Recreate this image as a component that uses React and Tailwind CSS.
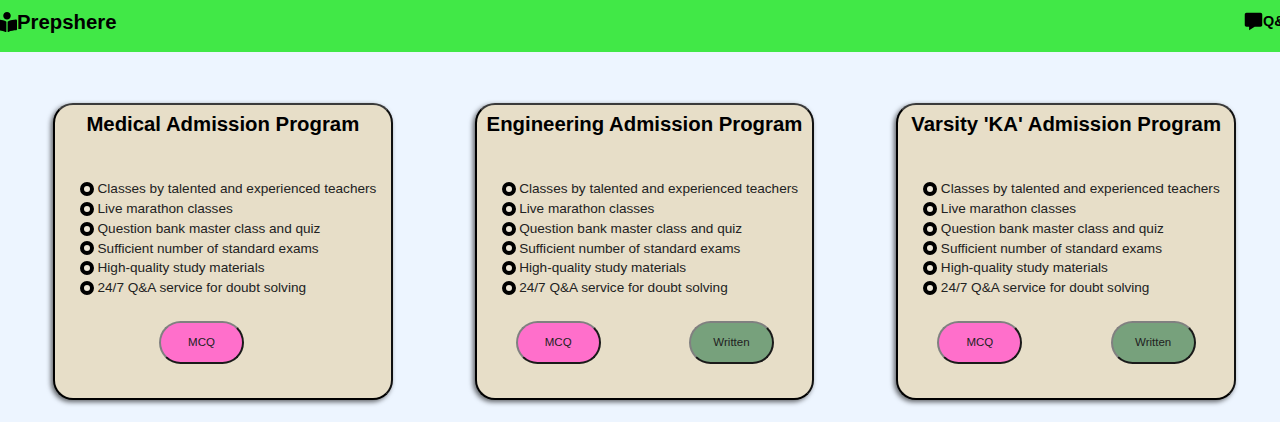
import React from "react";
import { FaBookReader } from "react-icons/fa";
import { BiSolidMessage } from "react-icons/bi";

const features = [
  "Classes by talented and experienced teachers",
  "Live marathon classes",
  "Question bank master class and quiz",
  "Sufficient number of standard exams",
  "High-quality study materials",
  "24/7 Q&A service for doubt solving",
];

function Btn({ label, color }) {
  return (
    <button className={`w-[85px] h-[43px] rounded-[22px] border-2 border-t-[#808080] border-l-[#808080] border-r-[#1a1a1a] border-b-[#1a1a1a] text-[11.5px] text-[#222] ${color}`}>
      {label}
    </button>
  );
}

function Card({ title, written }) {
  return (
    <div className="w-[339.67px] h-[297px] shrink-0 bg-[#e7dec8] rounded-[20px] border-2 border-t-[#3a3a3a] border-l-black border-r-[#111] border-b-black shadow-[-2px_2px_5px_rgba(0,0,0,0.6)] flex flex-col">
      <h2 className="text-[20.35px] leading-[24px] font-bold text-black text-center mt-[7px] whitespace-nowrap">{title}</h2>
      <ul className="mt-[43px] ml-[25px] text-[13.6px] leading-[19.84px] text-[#222]">
        {features.map((f) => (
          <li key={f} className="flex items-center gap-[3.5px] whitespace-nowrap">
            <span className="w-[14px] h-[14px] rounded-full border-[4.5px] border-black bg-[#efe8d8] shrink-0" />
            {f}
          </li>
        ))}
      </ul>
      <div className={`mt-[23px] flex ml-[39px] ${written ? "gap-[88.3px]" : "pl-[65px]"}`}>
        <Btn label="MCQ" color="bg-[#ff6fcb]" />
        {written && <Btn label="Written" color="bg-[#77a17c]" />}
      </div>
    </div>
  );
}

export default function App() {
  return (
    <div className="min-h-screen w-full overflow-hidden bg-[#edf5ff] font-['Liberation_Sans',sans-serif]">
      <nav className="h-[52px] bg-[#41e847] flex items-center justify-between pb-[8px] overflow-hidden">
        <div className="flex items-center text-[20.35px] font-bold text-black">
          <FaBookReader className="w-[20px] h-[20px] ml-[-3px] shrink-0" />
          <span className="leading-none">Prepshere</span>
        </div>
        <div className="flex items-center text-[14.4px] font-bold text-black w-[36px] overflow-hidden">
          <BiSolidMessage className="w-[21px] h-[21px] shrink-0 ml-[-1px] -mr-[1px]" />
          <span className="whitespace-nowrap">Q&amp;A</span>
        </div>
      </nav>
      <main className="flex justify-between pl-[53px] pr-[44px] pt-[51px]">
        <Card title="Medical Admission Program" />
        <Card title="Engineering Admission Program" written />
        <Card title="Varsity 'KA' Admission Program" written />
      </main>
    </div>
  );
}
